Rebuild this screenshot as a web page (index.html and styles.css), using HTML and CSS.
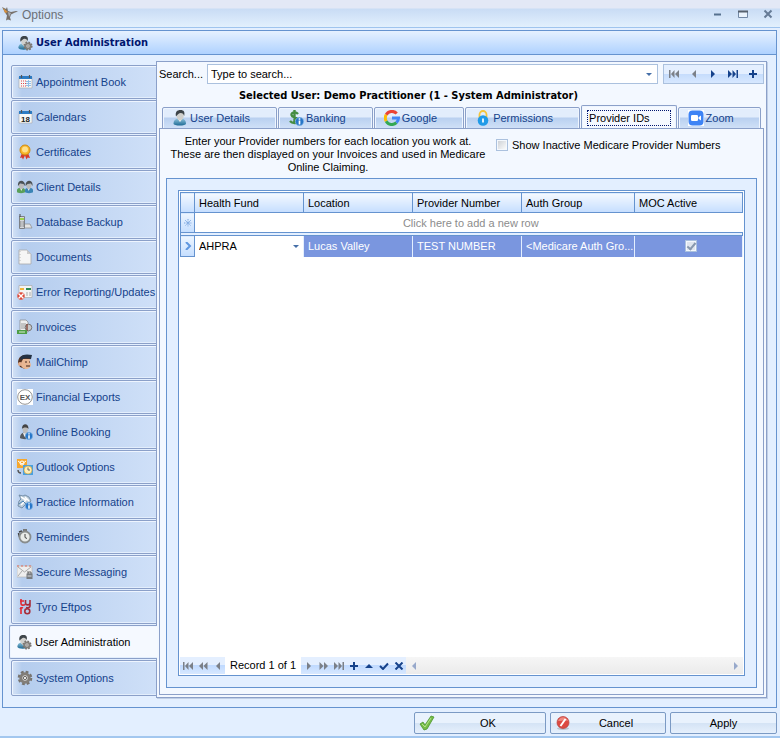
FILE: index.html
```html
<!DOCTYPE html>
<html lang="en">
<head>
  <meta charset="UTF-8" />
  <meta name="viewport" content="width=device-width, initial-scale=1" />
  <title>Options</title>
  <link rel="stylesheet" href="styles.css">
</head>
<body>
  <!-- shared icons -->
  <svg class="defs" aria-hidden="true">
    <defs>
      <linearGradient id="blueBody" x1="0" y1="0" x2="0" y2="1"><stop offset="0" stop-color="#8fc4dd"/><stop offset="1" stop-color="#1d6a94"/></linearGradient>
      <symbol id="person" viewBox="0 0 16 16">
        <path d="M1.500 13.500c0-3 2-4.500 4.500-5h3.500c3 .5 4.500 2.300 4.500 5 0 2.800-12.500 2.800-12.500 0z" fill="url(#blueBody)"/>
        <path d="M6 9l2 3 2-3z" fill="#fff"/>
        <path d="M4.500 3c0 5 1.200 7.500 3.500 7.500S12 8 12 3z" fill="#d0d0cd"/>
        <path d="M4 6.500C3 2 5 0 8.500 0c3.500 0 4.500 2 3.700 6-.6-2-1.500-3-3.500-3S6 4.500 4 6.500z" fill="#3d4449"/>
      </symbol>
      <symbol id="gear" viewBox="0 0 16 16">
        <circle cx="8" cy="8" r="6" fill="none" stroke="#77736e" stroke-width="2.600" stroke-dasharray="2.700 2"/>
        <circle cx="8" cy="8" r="4.200" fill="#ddd" stroke="#827e79" stroke-width="3"/>
        <circle cx="8" cy="8" r="1.600" fill="#fff" stroke="#66635e"/>
      </symbol>
      <symbol id="info" viewBox="0 0 8 8">
        <circle cx="4" cy="4" r="3.700" fill="#2676c9" stroke="#8dbcea" stroke-width=".6"/>
        <path d="M4 1.200v1.300M4 3.200v3.500" stroke="#fff" stroke-width="1.500"/>
      </symbol>
      <symbol id="userAdmin" viewBox="0 0 16 16">
        <use href="#person" width="14" height="16"/>
        <use href="#gear" x="6" y="6" width="10" height="10"/>
      </symbol>
      <symbol id="calendar" viewBox="0 0 16 16">
        <path d="M2 3h13v11H2z" fill="#f7f7f7" stroke="#a9a9a9" stroke-width=".6"/>
        <path d="M2 2h13v3H2z" fill="#2d7cc4"/>
        <path d="M4.500 1v3M12.500 1v3" stroke="#555" stroke-width="1.200"/>
      </symbol>
      <symbol id="first" viewBox="0 0 10 8"><path d="M0 0h1.500v8H0zM5.500 0v8L2 4zM10 0v8L6 4z"/></symbol>
      <symbol id="rew" viewBox="0 0 10 8"><path d="M5 0v8L1 4zM9.500 0v8L5.500 4z"/></symbol>
      <symbol id="prev" viewBox="0 0 10 8"><path d="M7 0v8L3 4z"/></symbol>
      <symbol id="plus" viewBox="0 0 10 8"><path d="M4 0h2v3h3v2H6v3H4V5H1V3h3z"/></symbol>
    </defs>
  </svg>

  <header class="titlebar">
    <svg class="icon" viewBox="0 0 16 16"><path d="M0 1l4 2 1-2 1 4 3 1 5-1 2 .5-3 1-4 2-1 3 1 3-3-1-2 1 1-5-2-3z" fill="#77706a"/><path d="M1 2l5 4-3 1z" fill="#d7913f"/><path d="M6 6l3 1-2 4z" fill="#a9adb4"/></svg>
    <h1>Options</h1>
    <div class="window-buttons">
      <button aria-label="Minimize"><svg viewBox="0 0 12 12"><path d="M2 6.500h7" stroke="#56718f" stroke-width="2"/></svg></button>
      <button aria-label="Maximize"><svg viewBox="0 0 12 12"><path d="M1.500 3.500h9v6h-9z" fill="#eaf3fd" stroke="#7288a5"/><path d="M1 3.500h10" stroke="#56616e" stroke-width="2"/></svg></button>
      <button aria-label="Close"><svg viewBox="0 0 12 12"><path d="M2.500 2.500l7 7M9.500 2.500l-7 7" stroke="#667b96" stroke-width="2"/></svg></button>
    </div>
  </header>

  <main class="group">
    <h2 class="group-title"><svg class="icon"><use href="#userAdmin"/></svg>User Administration</h2>
    <div class="group-body">
      <nav class="side">
        <button><svg class="icon" viewBox="0 0 16 16"><use href="#calendar"/><path d="M4 7h5M4 9.500h5M4 12h5" stroke="#e04848" stroke-dasharray="1 1"/><path d="M9 7.500h5M9 9.500h5M9 11.500h5M11.500 6v7" stroke="#8fbfe8"/></svg>Appointment Book</button>
        <button><svg class="icon" viewBox="0 0 16 16"><use href="#calendar"/><text x="8.500" y="12.500" class="day">18</text></svg>Calendars</button>
        <button><svg class="icon" viewBox="0 0 16 16"><path d="M5 9l-2 5 2-.5 1 2 2-4 1.500 4 1.200-2 2.300.5-2-5z" fill="#d93a2b"/><circle cx="8" cy="6" r="5" fill="#f8b62b" stroke="#cf8a12"/><circle cx="8" cy="5.500" r="3" fill="#ffe08a"/></svg>Certificates</button>
        <button><svg class="icon" viewBox="0 0 16 16"><path d="M0 11c0-3 8-3 8 0v2c0 1.500-8 1.500-8 0z" fill="#5aa05a"/><path d="M8 11c0-3 8-3 8 0v2c0 1.500-8 1.500-8 0z" fill="#3a84b5"/><path d="M2.500 8l1.800 4L6 8zM10 8l1.700 4 1.800-4z" fill="#eee"/><path d="M1.500 5h5.600c0 3-1 5-2.800 5s-2.800-2-2.800-5zM9 5h5.600c0 3-1 5-2.800 5S9 8 9 5z" fill="#bbb"/><path d="M1 7c-1-7 7.500-7 7 0L6.500 5 3 4.500zM8.500 7c-.5-7 8-7 7 0L14 4.500l-3.500.5z" fill="#4c5154"/></svg>Client Details</button>
        <button><svg class="icon" viewBox="0 0 16 16"><path d="M7 10h6l2 4H6z" fill="#e4e4e4" stroke="#888" stroke-width=".7"/><path d="M2.500 2.500h5v12h-5z" fill="#d6d8db" stroke="#7d8085"/><path d="M3 0v3" stroke="#444"/><path d="M3 4h4v2H3z" fill="#9bd34c"/><path d="M3 8h4M3 10h4M3 12h4" stroke="#777" stroke-dasharray="1 .5"/></svg>Database Backup</button>
        <button><svg class="icon" viewBox="0 0 16 16"><path d="M2 1h8l4 4v10H2z" fill="#f6f6f5" stroke="#aaa" stroke-width=".8"/><path d="M10 1v4h4z" fill="#ccc"/><path d="M3 2v12" stroke="#bbb" stroke-dasharray="1 2"/></svg>Documents</button>
        <button><svg class="icon" viewBox="0 0 16 16"><path d="M2 1.500h13v12H2z" fill="#f4f4f4" stroke="#aaa" stroke-width=".7"/><path d="M3 4h4v2H3z" fill="#efb53b"/><path d="M9 5h5" stroke="#2c8a54" stroke-width="2"/><path d="M9 9h2M12 9h2M9 11h2M12 11h2" stroke="#aaa"/><circle cx="4" cy="12" r="3.700" fill="#dd4a3a"/><path d="M1.500 9.500l5 5M6.500 9.500l-5 5" stroke="#fff" stroke-width="1.400"/></svg>Error Reporting/Updates</button>
        <button><svg class="icon" viewBox="0 0 16 16"><path d="M3 1h6l2 2v10H3z" fill="#eee" stroke="#888" stroke-width=".7"/><path d="M4 5h5M4 7h5M4 9h5" stroke="#9a9a9a"/><circle cx="11.500" cy="8.500" r="3.300" fill="#c8c8c8" stroke="#777"/><path d="M10 5v7" stroke="#8a5045" stroke-width="1.500"/><path d="M0 11h10v4H0z" fill="#4e9e45"/><path d="M2 13h6" stroke="#d9efd4"/></svg>Invoices</button>
        <button><svg class="icon" viewBox="0 0 16 16"><path d="M1 9C1 3 5 1 8 1l6 2v2L9 6l3 3-4 6-5-2z" fill="#553322"/><path d="M6 5h7c-1 3 1 4 1 6s-3 4.500-6 4c-3-1-5-4-4-6z" fill="#e8b793"/><path d="M3 4c2-4 7-4 12-3l-1 4c-3-1-7-1-10 1z" fill="#243244"/><path d="M8 8h2M12 8h1M9 12h4" stroke="#40251a"/><circle cx="3" cy="10" r="2" fill="#e4ae8c"/></svg>MailChimp</button>
        <button><svg class="icon" viewBox="0 0 16 16"><path d="M0 0h16v16H0z" fill="#fff"/><circle cx="8" cy="8" r="7.300" fill="#fff" stroke="#777" stroke-width=".8"/><text x="8" y="11" class="ex">EX</text></svg>Financial Exports</button>
        <button><svg class="icon" viewBox="0 0 16 16"><path d="M3 14c0-4 2-5 4-5.500h3c2 .5 4 2 3 5.500-2 1.500-8 1.500-10 0z" fill="#555a60"/><path d="M6 9l1.500 4L10 9z" fill="#eee"/><path d="M5.500 3c0 5 1.200 6.500 2.800 6.500S11 8 11 3z" fill="#bcbcbc"/><path d="M5 5c-.5-6.500 7-6.500 6.500 0-1-2-5.500-2-6.500 0z" fill="#444"/><use href="#info" x="8" y="8" width="8" height="8"/></svg>Online Booking</button>
        <button><svg class="icon" viewBox="0 0 16 16"><path d="M0 0h10v9H0z" fill="#f6a72e"/><path d="M1 2l4 3 4-3" fill="none" stroke="#fff"/><circle cx="5" cy="4" r="2" fill="none" stroke="#fff"/><path d="M6 6h10v10H6z" fill="#4ba0dc"/><circle cx="11" cy="11" r="4" fill="#ffeeb6" stroke="#d6a63d" stroke-width=".7"/><path d="M11 8.500V11h2" fill="none" stroke="#666"/><path d="M1 11c0 2 1 3 3 3" fill="none" stroke="#555" stroke-width="1.400"/></svg>Outlook Options</button>
        <button><svg class="icon" viewBox="0 0 16 16"><path d="M2 1l4 1 2-1 4 2 2 4-2 2-3 1-4 4-4-2 1-5 2-2z" fill="#b9cbda" stroke="#66809a" stroke-width=".8"/><path d="M4 3l5 3-5 5M8 3l4 4" fill="none" stroke="#fff" stroke-width="1.500"/><path d="M2 10l4-3 3 3" fill="none" stroke="#4c83b3"/><use href="#info" x="8" y="8" width="8" height="8"/></svg>Practice Information</button>
        <button><svg class="icon" viewBox="0 0 16 16"><path d="M6 0h4v3H6z" fill="#777"/><path d="M2 3l3-1M1.500 4l1 4" stroke="#444" stroke-width="1.600"/><circle cx="8" cy="8" r="5.500" fill="#e9ebe8" stroke="#888c8c" stroke-width="1.800"/><path d="M8 5v3.500l2 1" fill="none" stroke="#444"/></svg>Reminders</button>
        <button><svg class="icon" viewBox="0 0 16 16"><path d="M0 2h15v11H0z" fill="#eee" stroke="#b5b5b5" stroke-width=".7"/><path d="M0 2h15" stroke="#df6c5c" stroke-dasharray="2 2"/><path d="M1 3l6.500 5L14 3M1 12l4-5M14 12l-4-5" fill="none" stroke="#aaa"/><path d="M9.500 9.500h6V15h-6z" fill="#777b80"/><path d="M11 10V8h3v2" fill="none" stroke="#666"/><path d="M10.500 12h4" stroke="#ddd"/></svg>Secure Messaging</button>
        <button><svg class="icon" viewBox="0 0 16 16"><path d="M4 0v4.500c0 2 2.500 2 4 1M3 2h4M4 8v7M3 10c1-1 2-1.500 3-1" fill="none" stroke="#e32932" stroke-width="1.600"/><path d="M8.500 1v3c0 2.500 4.500 2.500 4.500 0V1M13 4v3c0 1.500-2 2-4 1.500" fill="none" stroke="#a62d3a" stroke-width="1.600"/><circle cx="10.300" cy="12.200" r="2.500" fill="none" stroke="#a62d3a" stroke-width="1.600"/></svg>Tyro Eftpos</button>
        <button class="selected" aria-current="page"><svg class="icon"><use href="#userAdmin"/></svg>User Administration</button>
        <button><svg class="icon"><use href="#gear"/></svg>System Options</button>
      </nav>

      <section class="pane">
        <div class="search-row">
          <label for="search">Search...</label>
          <div class="combo">
            <input id="search" type="text" value="Type to search...">
            <button class="drop" aria-label="Open list"></button>
          </div>
          <div class="navigator">
            <button disabled aria-label="First"><svg><use href="#first"/></svg></button>
            <button disabled aria-label="Previous"><svg><use href="#prev"/></svg></button>
            <button aria-label="Next"><svg class="flip"><use href="#prev"/></svg></button>
            <button aria-label="Last"><svg class="flip"><use href="#first"/></svg></button>
            <button aria-label="Add"><svg><use href="#plus"/></svg></button>
          </div>
        </div>
        <h3>Selected User: Demo Practitioner (1 - System Administrator)</h3>

        <div class="tabs" role="tablist">
          <button role="tab"><svg class="icon"><use href="#person"/></svg>User Details</button>
          <button role="tab"><svg class="icon" viewBox="0 0 16 16"><path d="M10 4C8 1.500 3 2 3.500 5S10 7 10 10.500 4 13.500 2 11M6.500 0v14" fill="none" stroke="#468d42" stroke-width="2.400"/><use href="#info" x="7" y="7" width="9" height="9"/></svg>Banking</button>
          <button role="tab"><svg class="icon" viewBox="0 0 16 16"><g fill="none" stroke-width="3"><path d="M2.200 4.800A6.500 6.500 0 0 1 12.700 3.500" stroke="#ea4335"/><path d="M2.200 4.800a6.500 6.500 0 0 0 0 6.400" stroke="#fbbc05"/><path d="M2.200 11.200a6.500 6.500 0 0 0 10.200 1.500" stroke="#34a853"/><path d="M8 8h6.500a6.500 6.500 0 0 1-2.100 4.700" stroke="#4285f4"/></g></svg>Google</button>
          <button role="tab"><svg class="icon" viewBox="0 0 16 16"><path d="M4.500 8V4.500a3.500 3.500 0 0 1 7 0V8" fill="none" stroke="#f5c53c" stroke-width="1.800"/><circle cx="8" cy="10.500" r="5.300" fill="#209be8"/><path d="M8 8.500v4" stroke="#fff" stroke-width="1.700"/></svg>Permissions</button>
          <button role="tab" aria-selected="true" class="selected"><span>Provider IDs</span></button>
          <button role="tab"><svg class="icon" viewBox="0 0 16 16"><path d="M0 0h16v16H0z" fill="#fff"/><rect x=".5" y=".5" width="15" height="15" rx="4" fill="#3d83f5"/><rect x="3" y="5" width="7" height="6" rx="1.300" fill="#fff"/><path d="M10.500 7.300L13 5.500v5l-2.500-1.800z" fill="#fff"/></svg>Zoom</button>
        </div>

        <div class="page" role="tabpanel">
          <div class="intro">
            <p>Enter your Provider numbers for each location you work at.<br>These are then displayed on your Invoices and used in Medicare<br>Online Claiming.</p>
            <label class="check"><input type="checkbox">Show Inactive Medicare Provider Numbers</label>
          </div>

          <div class="grid-panel">
            <div class="grid">
              <table>
                <colgroup><col class="indicator"><col class="field"><col class="field"><col class="field"><col class="auth"><col></colgroup>
                <thead>
                  <tr><th></th><th>Health Fund</th><th>Location</th><th>Provider Number</th><th>Auth Group</th><th>MOC Active</th></tr>
                </thead>
                <tbody>
                  <tr class="new-row">
                    <td class="mark"><svg viewBox="0 0 8 8"><path d="M4 0v8M0 4h8M1 1l6 6M7 1L1 7" stroke="#79a5e0" stroke-dasharray="1 .6"/></svg></td>
                    <td colspan="5">Click here to add a new row</td>
                  </tr>
                  <tr class="gap"><td colspan="6"></td></tr>
                  <tr class="current">
                    <td class="mark"><svg viewBox="0 0 8 8"><path d="M2 0l4 4-4 4" fill="none" stroke="#5f97e0" stroke-width="2"/></svg></td>
                    <td class="edit"><div class="fund"><select aria-label="Health Fund"><option>AHPRA</option></select></div></td>
                    <td>Lucas Valley</td>
                    <td>TEST NUMBER</td>
                    <td>&lt;Medicare Auth Gro...</td>
                    <td class="moc"><input type="checkbox" checked disabled aria-label="MOC Active"></td>
                  </tr>
                </tbody>
              </table>
              <div class="record-bar">
                <div class="record-nav">
                  <button disabled aria-label="First"><svg><use href="#first"/></svg></button>
                  <button disabled aria-label="Previous page"><svg><use href="#rew"/></svg></button>
                  <button disabled aria-label="Previous"><svg><use href="#prev"/></svg></button>
                </div>
                <span>Record 1 of 1</span>
                <div class="record-nav">
                  <button disabled aria-label="Next"><svg class="flip"><use href="#prev"/></svg></button>
                  <button disabled aria-label="Next page"><svg class="flip"><use href="#rew"/></svg></button>
                  <button disabled aria-label="Last"><svg class="flip"><use href="#first"/></svg></button>
                  <button aria-label="Append"><svg><use href="#plus"/></svg></button>
                  <button aria-label="Edit"><svg viewBox="0 0 10 8"><path d="M1 6l4-4 4 4z"/></svg></button>
                  <button aria-label="Accept"><svg viewBox="0 0 10 8"><path d="M1 4l3 3 5-5.500" fill="none" stroke="#16428b" stroke-width="2"/></svg></button>
                  <button aria-label="Cancel edit"><svg viewBox="0 0 10 8"><path d="M1.500.5l7 7M8.500.5l-7 7" fill="none" stroke="#16428b" stroke-width="2"/></svg></button>
                </div>
                <div class="scroll">
                  <button aria-label="Scroll left"><svg><use href="#prev"/></svg></button>
                  <button aria-label="Scroll right"><svg class="flip"><use href="#prev"/></svg></button>
                </div>
              </div>
            </div>
          </div>
        </div>
      </section>
    </div>
  </main>

  <footer class="actions">
    <button class="ok"><svg class="icon" viewBox="0 0 16 16"><path d="M1 9l3-2 2 3 6-9 3 1-7 12-3 1z" fill="#76bd48" stroke="#4b9630" stroke-width=".8"/><path d="M3 9l3 3 6-9" fill="none" stroke="#b5e38e"/></svg><span>OK</span></button>
    <button class="cancel"><svg class="icon" viewBox="0 0 16 16"><ellipse cx="8" cy="13.500" rx="6" ry="1.500" fill="#b9c3ce"/><circle cx="8" cy="7.500" r="6" fill="#dc4a42" stroke="#b7413c" stroke-width=".7"/><path d="M3 6c2-5 8-5 10 0-4-1-6 0-10 0z" fill="#ef8a80"/><path d="M5.500 11l5-7" stroke="#fff" stroke-width="2"/></svg><span>Cancel</span></button>
    <button class="apply"><span>Apply</span></button>
  </footer>
</body>
</html>
```

FILE: styles.css
```css
* {
  box-sizing: border-box;
}

html, body {
  margin: 0;
}

body {
  display: flex;
  flex-direction: column;
  min-height: 100vh;
  background: #e3efff;
  border-bottom: 2px solid #a3c7ef;
  color: #000;
  font-family: "Liberation Sans", Arial, sans-serif;
  font-size: 11px;
  line-height: 16px;
}

button, input, select {
  margin: 0;
  padding: 0;
  border: none;
  background: none;
  border-radius: 0;
  color: inherit;
  font: inherit;
}

h1, h2, h3, p {
  margin: 0;
}

.defs {
  position: absolute;
  width: 0;
  height: 0;
}

.icon {
  width: 16px;
  height: 16px;
  flex: none;
}

.day, .ex {
  font-weight: bold;
  font-size: 8px;
  text-anchor: middle;
}

.day {
  fill: #222;
}

.ex {
  fill: #555;
}

.flip {
  transform: scaleX(-1);
}

/* title bar */
.titlebar {
  display: flex;
  align-items: center;
  gap: 4px;
  height: 28px;
  padding: 0 6px 0 2px;
  background: linear-gradient(#e3e8f6 0, #e3e8f6 8px, #c9dcf5 9px, #e2f0fd 100%);
  border-bottom: 1px solid #9fc4ee;
}

.titlebar h1 {
  flex: 1;
  padding-top: 2px;
  color: #6b7077;
  font-weight: normal;
  font-size: 12px;
}

.window-buttons {
  display: flex;
  gap: 13px;
}

.window-buttons button,
.window-buttons svg {
  display: block;
  width: 12px;
  height: 12px;
}

/* main group */
.group {
  flex: 1;
  display: flex;
  flex-direction: column;
  margin: 2px 3px 4px 2px;
  border: 1px solid #6593cf;
}

.group-title {
  display: flex;
  align-items: center;
  gap: 3px;
  height: 24px;
  padding-left: 14px;
  background: linear-gradient(#e6f1ff, #afd2ff);
  border-bottom: 1px solid #6593cf;
  color: #00156e;
  font: bold 11px "DejaVu Sans Condensed", sans-serif;
}

.group-body {
  flex: 1;
  display: flex;
  padding: 6px 9px 9px 6px;
}

/* side tabs */
.side {
  flex: none;
  width: 148px;
  display: flex;
  flex-direction: column;
  gap: 1px;
  padding-top: 4px;
  margin-right: -1px;
}

.side button {
  display: flex;
  align-items: center;
  gap: 3px;
  height: 34px;
  margin-left: 2px;
  padding-left: 5px;
  border: 1px solid #8ba0c9;
  border-radius: 2px 0 0 2px;
  background: linear-gradient(90deg, #d5e3f6 0, #b5cdee 10px, #cfe0f8 100%);
  box-shadow: inset 1px 1px #eef5ff, inset 0 -1px #e3eefc;
  color: #15428b;
  white-space: nowrap;
}

.side button:last-child {
  height: 36px;
}

.side .selected {
  position: relative;
  margin-left: 0;
  padding-left: 6px;
  border-right: none;
  background: #f5f9ff;
  color: #000;
}

/* right pane */
.pane {
  flex: 1;
  min-width: 0;
  display: flex;
  flex-direction: column;
  padding: 2px;
  border: 1px solid #8ba0c9;
  background: #f3f8ff;
  box-shadow: 1px 1px #c0cfe6;
}

.search-row {
  display: flex;
  align-items: center;
  height: 20px;
}

.search-row label {
  width: 48px;
}

.combo {
  flex: 1;
  display: flex;
  height: 20px;
  margin-right: 5px;
  border: 1px solid #abc1de;
  background: #fff;
}

.combo input {
  flex: 1;
  min-width: 0;
  padding-left: 3px;
  outline: none;
}

.drop {
  display: flex;
  align-items: center;
  width: 11px;
}

.drop::after, .fund::after {
  content: "";
  border: 3px solid transparent;
  border-top-color: #456fa8;
  border-bottom: none;
}

.navigator {
  display: flex;
  justify-content: space-around;
  width: 101px;
  height: 20px;
  border: 1px solid #abc1de;
  background: linear-gradient(#e4efff 50%, #c5dcfc 50%, #d7e8ff);
}

.navigator button, .record-nav button, .scroll button {
  display: flex;
  align-items: center;
  justify-content: center;
  width: 15px;
}

.navigator svg, .record-nav svg, .scroll svg {
  width: 10px;
  height: 8px;
  fill: #15428b;
}

.navigator button:disabled svg, .record-nav button:disabled svg {
  fill: #7b8088;
}

h3 {
  height: 21px;
  padding: 5px 106px 0 0;
  font: bold 11px/14px "DejaVu Sans Condensed", sans-serif;
  text-align: center;
}

/* tabs */
.tabs {
  display: flex;
  align-items: flex-end;
  gap: 1px;
  height: 24px;
  margin-bottom: -1px;
  padding: 0 3px;
}

.tabs button {
  display: flex;
  align-items: center;
  gap: 2px;
  height: 22px;
  padding: 0 26px 0 9px;
  border: 1px solid #8ba0c9;
  border-radius: 2px 2px 0 0;
  background: linear-gradient(#e2edfc 45%, #b9d0f0 50%, #cfe0f7);
  box-shadow: inset 1px 1px #eef5ff, inset -1px 0 #eef5ff;
  color: #15428b;
  white-space: nowrap;
}

.tabs .selected {
  height: 24px;
  padding: 0 5px;
  border-bottom: none;
  background: #f5f9ff;
  color: #000;
}

.tabs .selected span {
  padding: 0 20px 0 1px;
  line-height: 14px;
  border: 1px dotted #00156e;
}

.page {
  flex: 1;
  display: flex;
  flex-direction: column;
  padding: 6px;
  border: 1px solid #8ba0c9;
}

.intro {
  display: flex;
  height: 43px;
}

.intro p {
  width: 324px;
  line-height: 13px;
  text-align: center;
}

.check {
  display: flex;
  align-items: center;
  gap: 4px;
  height: 20px;
  margin-left: 6px;
}

input[type="checkbox"] {
  appearance: none;
  flex: none;
  width: 12px;
  height: 12px;
  border: 1px solid #abc1de;
  background: linear-gradient(135deg, #c9cdd3, #fff);
  box-shadow: inset 0 0 0 1px #f4f8fd;
}

/* provider grid */
.grid-panel {
  flex: 1;
  display: flex;
  padding: 11px;
  border: 1px solid #6593cf;
  background: #e3efff;
}

.grid {
  flex: 1;
  min-width: 0;
  display: flex;
  flex-direction: column;
  justify-content: space-between;
  padding: 1px;
  border: 1px solid #6593cf;
  background: #fff;
}

table {
  width: 100%;
  table-layout: fixed;
  border-collapse: collapse;
}

.indicator {
  width: 14px;
}

.field {
  width: 109px;
}

.auth {
  width: 113px;
}

th, td {
  height: 20px;
  padding: 0 0 0 4px;
  overflow: hidden;
  text-align: left;
  text-overflow: ellipsis;
  white-space: nowrap;
  font-weight: normal;
}

th {
  border: 1px solid #6593cf;
  background: linear-gradient(#f5f9ff, #c5deff);
}

.mark {
  padding: 0;
  border: 1px solid #6593cf;
  background: linear-gradient(#edf5ff, #c5deff);
  text-align: center;
}

.mark svg {
  display: block;
  width: 8px;
  height: 8px;
  margin: 0 auto;
}

.new-row td + td {
  color: #8c8c8c;
  text-align: center;
}

.gap td {
  height: 3px;
  padding: 0;
  border: 1px solid #6593cf;
  background: #e3efff;
}

.current td {
  height: 21px;
}

.current td + td {
  border-right: 1px solid #e3efff;
  background: #7a96df;
  color: #fff;
}

.current .edit {
  background: #fff;
  color: #000;
}

.fund {
  display: flex;
  align-items: center;
  padding-right: 4px;
}

.fund select {
  flex: 1;
  appearance: none;
  outline: none;
}

.moc input {
  display: block;
  margin: 0 auto;
  background: #dfe5ee;
}

.moc input::before {
  content: "";
  display: block;
  width: 7px;
  height: 3px;
  margin: 2px 1px;
  border: solid #8798ae;
  border-width: 0 0 2px 2px;
  transform: rotate(-50deg);
}

.record-bar {
  display: flex;
  height: 17px;
  line-height: 17px;
}

.record-bar span {
  padding: 0 5px;
}

.record-nav {
  display: flex;
  background: linear-gradient(#e4efff 50%, #c0daff 50%, #d7e8ff);
}

.scroll {
  flex: 1;
  display: flex;
  justify-content: space-between;
  background: linear-gradient(#f6f6f6, #ebebeb);
}

.scroll svg {
  fill: #98a9cb;
}

/* dialog buttons */
.actions {
  display: flex;
  justify-content: flex-end;
  gap: 4px;
  padding: 0 3px 2px;
}

.actions button {
  display: flex;
  align-items: center;
  height: 22px;
  padding: 0 4px;
  border: 1px solid #7b9ac4;
  border-radius: 2px;
  background: linear-gradient(#e9f2fd 48%, #d4e3f5 50%, #e6f0fc);
}

.actions span {
  flex: 1;
  text-align: center;
}

.ok {
  width: 132px;
}

.cancel {
  width: 116px;
}

.apply {
  width: 107px;
}
```
